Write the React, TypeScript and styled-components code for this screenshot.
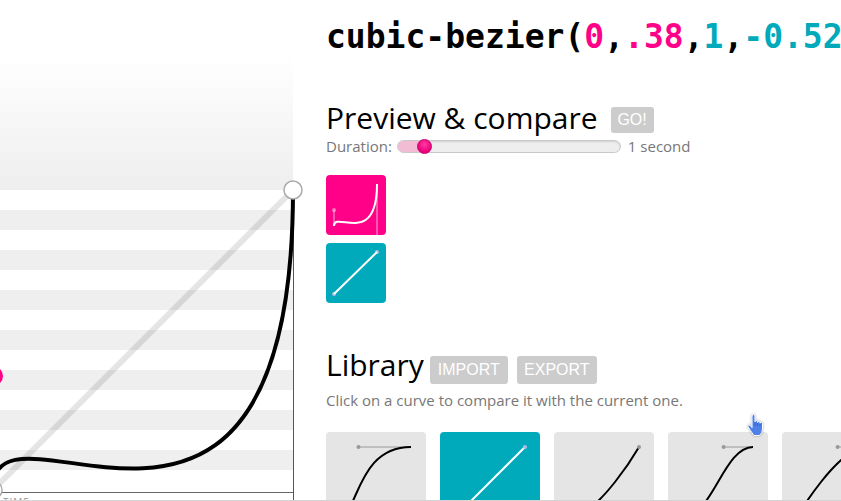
import styled, { createGlobalStyle } from "styled-components";

const PINK = "#ff0088";
const CYAN = "#00aabb";

const GlobalStyle = createGlobalStyle`
html, body {
  margin: 0;
  padding: 0;
  overflow: hidden;
  background: #fff;
  font-family: "Open Sans", "Noto Sans", sans-serif;
}
`;

const Page = styled("div")`
position: relative;
display: flex;
height: 501px;
box-sizing: border-box;
border-bottom: 1px solid #d4d4d4;
overflow: hidden;
`;

const GraphPanel = styled("div")`
position: relative;
z-index: 1;
flex: 0 0 294px;
height: 100%;
svg {
  display: block;
  overflow: visible;
}
`;

const Side = styled("div")`
flex: 1;
min-width: 0;
padding-left: 32px;
display: flex;
flex-direction: column;
`;

const Title = styled("h1")`
margin: 17px 0 0;
font-family: "DejaVu Sans Mono", "Liberation Mono", monospace;
font-weight: bold;
font-size: 33px;
line-height: 40px;
white-space: nowrap;
color: #000;
`;

const Part = styled("span")<{ $color?: string }>`
color: ${(p) => p.$color || "inherit"};
`;

const HeaderRow = styled("div")<{ $top: number }>`
display: flex;
align-items: flex-start;
column-gap: 9px;
margin-top: ${(p) => p.$top}px;
`;

const Heading = styled("h2")<{ $gap?: number }>`
margin: 0 ${(p) => p.$gap ?? 0}px 0 0;
font-weight: normal;
font-size: 30px;
line-height: 30px;
color: #000;
`;

const Button = styled("button")<{ $width: number; $height: number; $top: number }>`
width: ${(p) => p.$width}px;
height: ${(p) => p.$height}px;
margin-top: ${(p) => p.$top}px;
padding: 0;
border: 0;
border-radius: 3px;
background: #cccccc;
color: #fff;
font-family: "Liberation Sans", Arial, sans-serif;
font-size: 16px;
line-height: ${(p) => p.$height}px;
`;

const DurationRow = styled("div")`
display: flex;
align-items: center;
height: 16px;
margin-top: 5px;
font-size: 15px;
color: #777;
`;

const Track = styled("div")`
position: relative;
width: 222px;
height: 11px;
margin: 0 7px 0 5px;
border: 1px solid #c8c8c8;
border-radius: 7px;
background: #eeeeee;
box-shadow: inset 0 1px 2px rgba(0, 0, 0, 0.12);
`;

const TrackFill = styled("div")`
height: 100%;
border-radius: 7px 0 0 7px;
background: #f3bcd5;
`;

const Thumb = styled("div")`
position: absolute;
top: -2px;
width: 13px;
height: 13px;
margin-left: -7px;
border-radius: 50%;
background: radial-gradient(circle at 50% 35%, #ff3a9f, #e8007a 70%);
border: 1px solid #c9006a;
`;

const PreviewList = styled("div")`
display: flex;
flex-direction: column;
row-gap: 8px;
margin-top: 21px;
`;

const PreviewBox = styled("div")<{ $bg: string }>`
width: 60px;
height: 60px;
border-radius: 4px;
background: ${(p) => p.$bg};
svg {
  display: block;
}
`;

const Note = styled("p")`
margin: 6px 0 0;
font-size: 15px;
line-height: 20px;
color: #777;
`;

const Cards = styled("div")`
display: flex;
column-gap: 14px;
margin-top: 22px;
`;

const Card = styled("div")<{ $active?: boolean }>`
flex: 0 0 100px;
height: 100px;
border-radius: 4px;
background: ${(p) => (p.$active ? CYAN : "#e5e5e5")};
svg {
  display: block;
}
`;

const Cursor = styled("div")`
position: absolute;
z-index: 2;
left: 747px;
top: 414px;
width: 17px;
height: 24px;
filter: drop-shadow(0 0 1px rgba(0, 0, 0, 0.35));
`;

type Bez = [number, number, number, number];

function curvePath(b: Bez, x0: number, y0: number, w: number, h: number) {
    const pt = (x: number, y: number) => `${x0 + x * w} ${y0 + (1 - y) * h}`;
    return `M ${pt(0, 0)} C ${pt(b[0], b[1])}, ${pt(b[2], b[3])}, ${pt(1, 1)}`;
}

const CURRENT: Bez = [0, 0.38, 1, -0.52];

function Graph() {
    const x0 = -7;
    const y0 = 190;
    const size = 300;
    const stripes = [210, 250, 290, 330, 370, 410, 450];
    return (
        <svg width="294" height="501" viewBox="0 0 294 501">
            <defs>
                <linearGradient id="above" x1="0" y1="0" x2="0" y2="1">
                    <stop offset="0" stopColor="#ffffff" />
                    <stop offset="1" stopColor="#eeeeee" />
                </linearGradient>
            </defs>
            <rect x="0" y="55" width="293" height="135" fill="url(#above)" />
            {stripes.map((y) => (
                <rect key={y} x="0" y={y} width="293" height="20" fill="#efefef" />
            ))}
            <line x1={x0} y1={y0 + size} x2={x0 + size} y2={y0} stroke="rgba(0,0,0,0.1)" strokeWidth="6" />
            <line x1="0" y1="492.5" x2="293" y2="492.5" stroke="#666" strokeWidth="1" />
            <line x1="293.5" y1={y0} x2="293.5" y2="501" stroke="#555" strokeWidth="1" />
            <path d={curvePath(CURRENT, x0, y0, size, size)} fill="none" stroke="#000" strokeWidth="4" />
            <circle cx={x0} cy={y0 + size - 0.38 * size} r="10" fill={PINK} />
            <circle cx={x0} cy={y0 + size} r="9" fill="#fff" stroke="#aaa" strokeWidth="1.5" />
            <circle cx={x0 + size} cy={y0} r="9" fill="#fff" stroke="#aaa" strokeWidth="1.5" />
            <text x="3" y="506" fontSize="10" fill="#999" fontFamily="Open Sans, sans-serif" letterSpacing="1">
                TIME
            </text>
        </svg>
    );
}

function MiniCurve({ b, handles }: { b: Bez; handles: string }) {
    const x0 = 8, y0 = 9, w = 43, h = 42;
    const px = (x: number) => x0 + x * w;
    const py = (y: number) => y0 + (1 - y) * h;
    return (
        <svg width="60" height="60" viewBox="0 0 60 60">
            <line x1={px(0)} y1={py(0)} x2={px(b[0])} y2={py(b[1])} stroke={handles} strokeWidth="1.5" />
            <line x1={px(1)} y1={py(1)} x2={px(b[2])} y2={py(b[3])} stroke={handles} strokeWidth="1.5" />
            <circle cx={px(b[0])} cy={py(b[1])} r="2" fill={handles} />
            <circle cx={px(b[2])} cy={py(b[3])} r="2" fill={handles} />
            <path d={curvePath(b, x0, y0, w, h)} fill="none" stroke="#fff" strokeWidth="2" />
        </svg>
    );
}

const LIBRARY: { name: string; b: Bez }[] = [
    { name: "ease", b: [0.25, 0.1, 0.25, 1] },
    { name: "linear", b: [0, 0, 1, 1] },
    { name: "ease-in", b: [0.42, 0, 1, 1] },
    { name: "ease-in-out", b: [0.42, 0, 0.58, 1] },
    { name: "ease-out", b: [0, 0, 0.58, 1] },
];

function LibraryCurve({ b, active }: { b: Bez; active: boolean }) {
    const x0 = 15, y0 = 15, s = 70;
    const px = (x: number) => x0 + x * s;
    const py = (y: number) => y0 + (1 - y) * s;
    const handle = active ? "#b8b8e8" : "#999";
    return (
        <svg width="100" height="100" viewBox="0 0 100 100">
            <line x1={px(0)} y1={py(0)} x2={px(b[0])} y2={py(b[1])} stroke={handle} strokeWidth="1" />
            <line x1={px(1)} y1={py(1)} x2={px(b[2])} y2={py(b[3])} stroke={handle} strokeWidth="1" />
            <path d={curvePath(b, x0, y0, s, s)} fill="none" stroke={active ? "#fff" : "#000"} strokeWidth="2" />
            <circle cx={px(b[0])} cy={py(b[1])} r="2" fill={handle} />
            <circle cx={px(b[2])} cy={py(b[3])} r="2" fill={handle} />
        </svg>
    );
}

function HandCursor() {
    return (
        <Cursor>
            <svg width="17" height="24" viewBox="0 0 17 24">
                <path
                    d="M5 2 Q5 0.5 6.5 0.5 Q8 0.5 8 2 L8 7.6 Q8 6.5 9.25 6.5 Q10.5 6.5 10.5 7.6 L10.5 8.4 Q10.5 7.3 11.75 7.3 Q13 7.3 13 8.4 L13 9.3 Q13 8.2 14.2 8.2 Q15.5 8.2 15.5 9.5 L15.5 15 Q15.5 19 12.5 21.5 L7 21.5 Q5 19 3.5 16.5 L1 12.8 Q0.4 11.2 1.8 10.9 Q3 10.7 4 12.3 L5 13.6 Z"
                    fill="#4f80e8"
                    stroke="#fff"
                    strokeWidth="1"
                    strokeLinejoin="round"
                />
                <path d="M8 8.5 V12 M10.5 9 V12 M13 9.5 V12" stroke="#2f5bbf" strokeWidth="0.8" />
            </svg>
        </Cursor>
    );
}

export default function App() {
    return (
        <Page>
            <GlobalStyle />
            <GraphPanel>
                <Graph />
            </GraphPanel>
            <Side>
                <Title>
                    cubic-bezier(<Part $color={PINK}>0</Part>,<Part $color={PINK}>.38</Part>,
                    <Part $color={CYAN}>1</Part>,<Part $color={CYAN}>-0.52</Part>)
                </Title>
                <HeaderRow $top={46}>
                    <Heading $gap={4}>Preview &amp; compare</Heading>
                    <Button $width={43} $height={26} $top={4}>GO!</Button>
                </HeaderRow>
                <DurationRow>
                    Duration:
                    <Track>
                        <TrackFill style={{ width: 26 }} />
                        <Thumb style={{ left: 26 }} />
                    </Track>
                    1 second
                </DurationRow>
                <PreviewList>
                    <PreviewBox $bg={PINK}>
                        <MiniCurve b={CURRENT} handles="rgba(255,255,255,0.45)" />
                    </PreviewBox>
                    <PreviewBox $bg={CYAN}>
                        <MiniCurve b={[0, 0, 1, 1]} handles="#b8b8e8" />
                    </PreviewBox>
                </PreviewList>
                <HeaderRow $top={47}>
                    <Heading $gap={-3}>Library</Heading>
                    <Button $width={78} $height={28} $top={6}>IMPORT</Button>
                    <Button $width={80} $height={28} $top={6}>EXPORT</Button>
                </HeaderRow>
                <Note>Click on a curve to compare it with the current one.</Note>
                <Cards>
                    {LIBRARY.map((c, i) => (
                        <Card key={c.name} $active={i === 1}>
                            <LibraryCurve b={c.b} active={i === 1} />
                        </Card>
                    ))}
                </Cards>
            </Side>
            <HandCursor />
        </Page>
    );
}
